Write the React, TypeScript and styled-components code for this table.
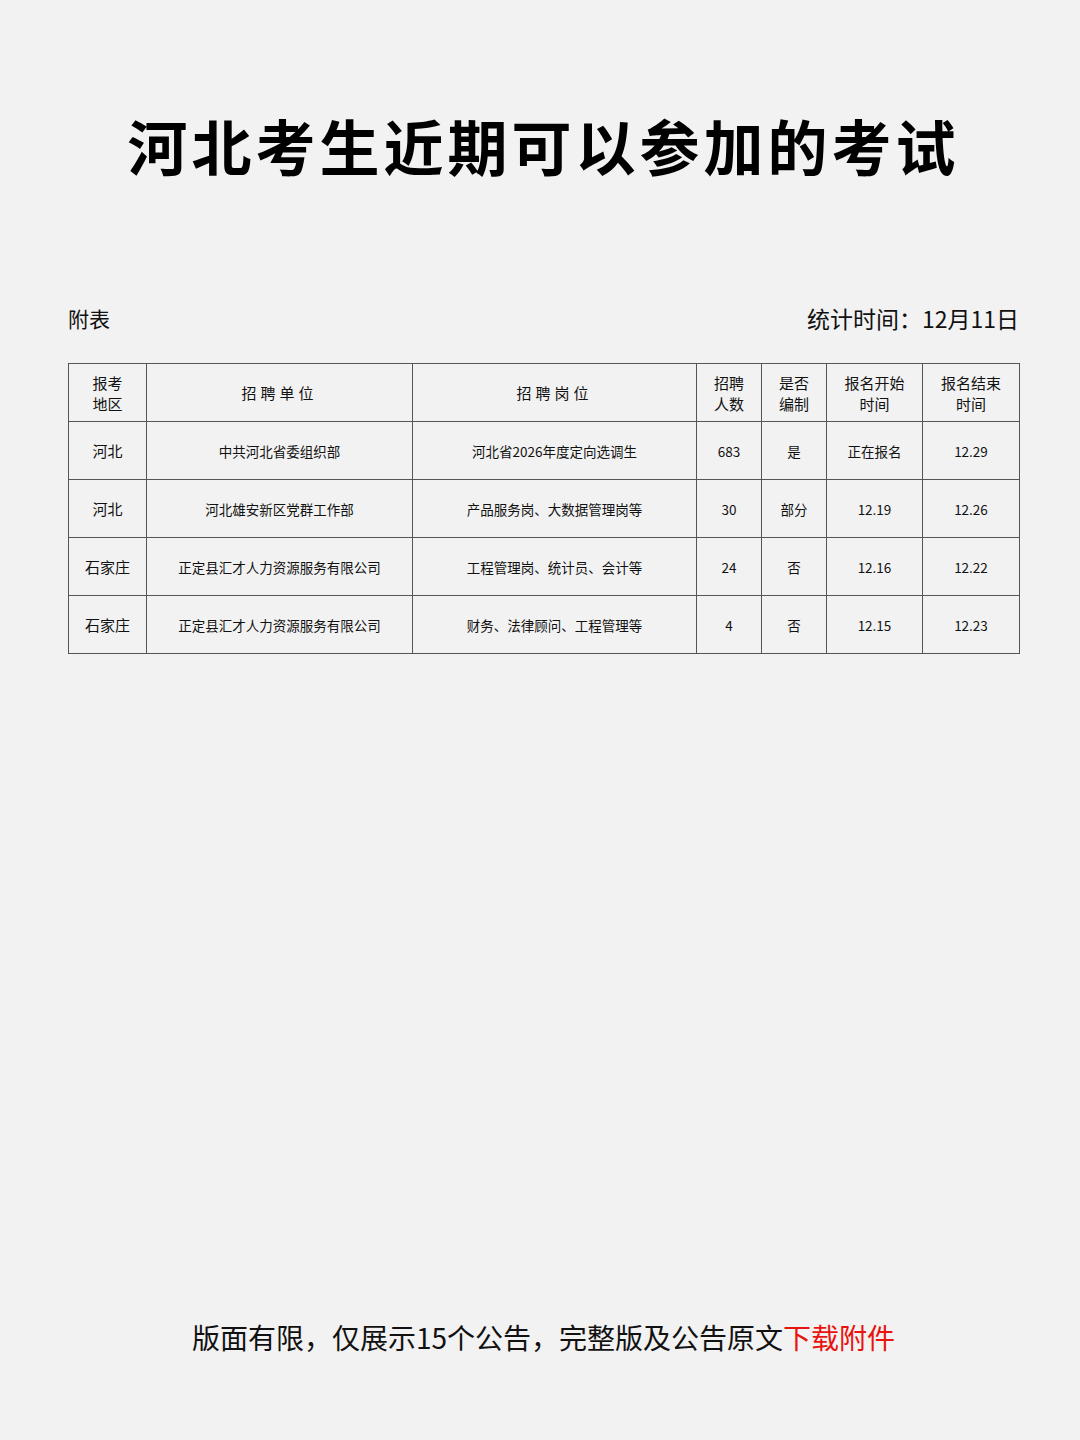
import React from "react";
import styled, { createGlobalStyle } from "styled-components";

const GlobalStyle = createGlobalStyle`
  html, body {
    margin: 0;
    padding: 0;
    background: #f2f2f2;
  }
  body {
    font-family: "Noto Sans CJK SC", "Noto Sans", sans-serif;
    color: #111;
  }
`;

const Page = styled.div`
  width: 1080px;
  height: 1440px;
  box-sizing: border-box;
  padding: 105px 61px 0 68px;
  display: flex;
  flex-direction: column;
`;

const Title = styled.h1`
  margin: 0;
  text-align: center;
  font-size: 60px;
  line-height: 80px;
  font-weight: 700;
  letter-spacing: 4px;
  color: #000;
`;

const MetaRow = styled.div`
  margin-top: 113px;
  display: flex;
  justify-content: space-between;
  align-items: center;
  height: 40px;
`;

const Label = styled.span<{ $size: number }>`
  font-size: ${(p) => p.$size}px;
  color: #111;
`;

const Table = styled.table`
  margin-top: 25px;
  width: 951px;
  border-collapse: collapse;
  table-layout: fixed;
  border: 1px solid #555;
`;

const Th = styled.th<{ $spaced?: boolean }>`
  height: 57px;
  border: 1px solid #555;
  font-weight: 400;
  font-size: 15px;
  line-height: 21px;
  letter-spacing: ${(p) => (p.$spaced ? "4px" : "0")};
  padding: 0;
  text-align: center;
  color: #111;
`;

const Td = styled.td<{ $size?: number }>`
  height: 57px;
  border: 1px solid #555;
  font-size: ${(p) => p.$size ?? 13.5}px;
  padding: 0;
  text-align: center;
  color: #111;
`;

const Spacer = styled.div`
  flex: 1;
`;

const Footer = styled.p`
  margin: 0 0 83px;
  text-align: center;
  font-size: 28px;
  line-height: 40px;
  color: #111;
`;

const Red = styled.span`
  color: #e8140f;
`;

const widths = [78, 266, 284, 65, 65, 96, 97];

const rows = [
  ["河北", "中共河北省委组织部", "河北省2026年度定向选调生", "683", "是", "正在报名", "12.29"],
  ["河北", "河北雄安新区党群工作部", "产品服务岗、大数据管理岗等", "30", "部分", "12.19", "12.26"],
  ["石家庄", "正定县汇才人力资源服务有限公司", "工程管理岗、统计员、会计等", "24", "否", "12.16", "12.22"],
  ["石家庄", "正定县汇才人力资源服务有限公司", "财务、法律顾问、工程管理等", "4", "否", "12.15", "12.23"],
];

export default function App() {
  return (
    <>
      <GlobalStyle />
      <Page>
        <Title>河北考生近期可以参加的考试</Title>
        <MetaRow>
          <Label $size={21}>附表</Label>
          <Label $size={23}>统计时间：12月11日</Label>
        </MetaRow>
        <Table>
          <colgroup>
            {widths.map((w, i) => (
              <col key={i} style={{ width: w }} />
            ))}
          </colgroup>
          <thead>
            <tr>
              <Th>报考<br />地区</Th>
              <Th $spaced>招聘单位</Th>
              <Th $spaced>招聘岗位</Th>
              <Th>招聘<br />人数</Th>
              <Th>是否<br />编制</Th>
              <Th>报名开始<br />时间</Th>
              <Th>报名结束<br />时间</Th>
            </tr>
          </thead>
          <tbody>
            {rows.map((r, i) => (
              <tr key={i}>
                {r.map((c, j) => (
                  <Td key={j} $size={j === 0 ? 15 : 13.5}>
                    {c}
                  </Td>
                ))}
              </tr>
            ))}
          </tbody>
        </Table>
        <Spacer />
        <Footer>
          版面有限，仅展示15个公告，完整版及公告原文<Red>下载附件</Red>
        </Footer>
      </Page>
    </>
  );
}
